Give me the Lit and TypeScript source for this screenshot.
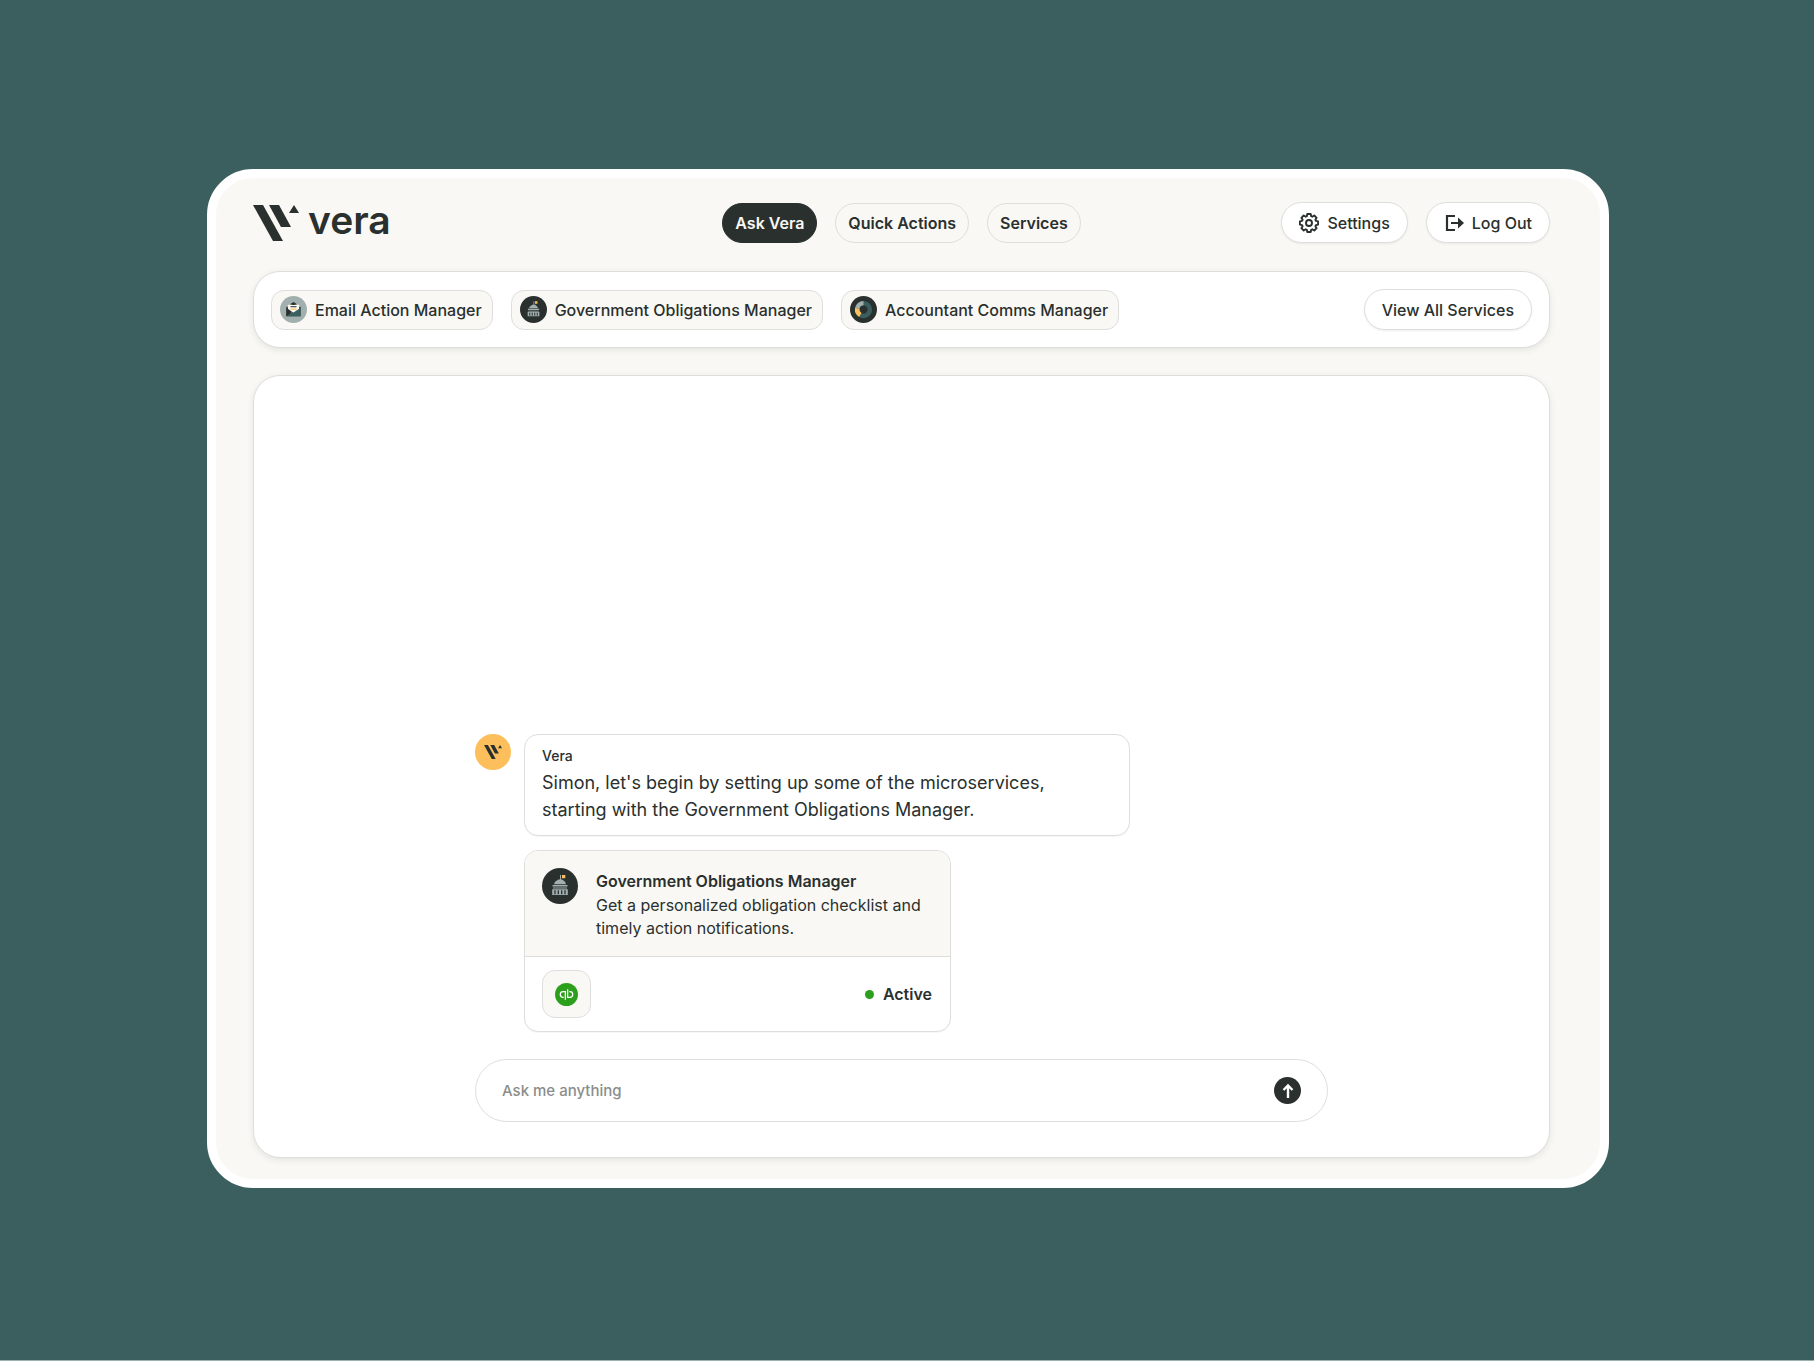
import { LitElement, html, css, svg } from "lit";
import { customElement, property, state } from "lit/decorators.js";

const markShapes = svg`
  <path d="M0 0h10l20 36H20z" />
  <path d="M16 0h10l12 22H28z" />
  <path d="M41 0l5 8H36z" />
`;

@customElement("vera-mark")
class VeraMark extends LitElement {
  static styles = css`
    :host { display: block; }
    .mark { display: block; width: 100%; fill: currentColor; }
  `;
  render() {
    return html`<svg class="mark" viewBox="0 0 46 36" aria-hidden="true">${markShapes}</svg>`;
  }
}

@customElement("service-icon")
class ServiceIcon extends LitElement {
  @property() name = "";

  static styles = css`
    :host { display: block; flex: none; width: 27px; height: 27px; }
    .icon { display: block; width: 100%; height: 100%; }
  `;

  private email() {
    return svg`
      <circle cx="18" cy="18" r="18" fill="#a1afae" />
      <path d="M8.500 14.500h19V27h-19z" fill="#2a302e" />
      <path d="M14 10.500l4-2.500 4 2.500v2h-8z" fill="#2a302e" />
      <path d="M10.500 11.500h15v9l-7.500 3.500-7.500-3.500z" fill="#fffdf8" />
      <path d="M15.500 9.500h5l-1.200 2.500h-2.600z" fill="#2a302e" />
      <path d="M14 14.300h8" stroke="#2a302e" stroke-width="1.400" />
      <path d="M14 17.500h8" stroke="#fdbf5b" stroke-width="1.600" />
      <path d="M27.500 15.500V27h-19l7.500-6 2 1z" fill="#3b5e5f" />
      <path d="M8.500 15.500l7.500 5.500-7.500 6z" fill="#2a302e" />
    `;
  }

  private government() {
    return svg`
      <circle cx="18" cy="18" r="18" fill="#2a302e" />
      <path d="M18.500 7v5" stroke="#a1afae" stroke-width="1" />
      <path d="M20 7h3.300v3.300H20z" fill="#fdbf5b" />
      <path d="M12 16.200c.5-2.500 2.600-3.500 4.300-4.700h3.900c1.700 1.200 3.300 2.200 3.800 4.700z" fill="#a1afae" />
      <path d="M10.500 17h15v1.500h-15zM11 19.500h14v1H11z" fill="#a1afae" />
      <path d="M10.200 21.200h15.600V27H10.200z" fill="#a1afae" />
      <path d="M13 22.200v4M16.300 22.200v4M19.700 22.200v4M23 22.200v4" stroke="#2a302e" stroke-width="1.300" />
    `;
  }

  private accountant() {
    return svg`
      <circle cx="18" cy="18" r="18" fill="#2a302e" />
      <circle cx="18" cy="18" r="8.500" fill="none" stroke="#3b5e5f" stroke-width="6" />
      <path d="M9.700 16.500A8.500 8.500 0 0 1 18 9.500" fill="none" stroke="#a1afae" stroke-width="6" />
      <path d="M9.700 16.500A8.500 8.500 0 0 0 13.700 25.300" fill="none" stroke="#fdbf5b" stroke-width="6" />
    `;
  }

  render() {
    const art =
      this.name === "email" ? this.email() : this.name === "government" ? this.government() : this.accountant();
    return html`<svg class="icon" viewBox="0 0 36 36" aria-hidden="true">${art}</svg>`;
  }
}

const tabs = ["Ask Vera", "Quick Actions", "Services"];
const services = [
  { icon: "email", label: "Email Action Manager" },
  { icon: "government", label: "Government Obligations Manager" },
  { icon: "accountant", label: "Accountant Comms Manager" },
];

@customElement("app-root")
class AppRoot extends LitElement {
  @state() private active = "Ask Vera";

  static styles = css`
    :host {
      --ink: #2a302e;
      --paper: #f9f8f4;
      --line: #dededc;
      --amber: #fdbf5b;
      --green: #2ca01c;
      display: flex;
      box-sizing: border-box;
      min-height: 100vh;
      padding: 169px 205px 172px 207px;
      border-bottom: 1px solid #9eafaf;
      background: #3b5e5f;
      color: var(--ink);
      font: 400 16px/24px Inter, "Liberation Sans", sans-serif;
    }
    * { box-sizing: border-box; }
    button, input { font: inherit; color: inherit; margin: 0; }
    button { cursor: pointer; }
    p, h1, h2 { margin: 0; font: inherit; }

    .window {
      flex: 1;
      min-width: 0;
      display: flex;
      flex-direction: column;
      border: 9px solid #fff;
      border-radius: 46px;
      background: var(--paper);
      padding: 24px 50px 21px 37px;
    }
    .header {
      display: grid;
      grid-template-columns: 1fr auto 1fr;
      align-items: center;
      margin-bottom: 28px;
    }
    .brand {
      display: flex;
      align-items: center;
      gap: 9px;
      color: inherit;
      text-decoration: none;
    }
    .brand-mark { width: 46px; }
    .brand-name { font-size: 39px; line-height: 36px; font-weight: 600; padding-bottom: 5px; }
    .tabs, .account, .chips { display: flex; gap: 18px; }
    .account { justify-content: flex-end; }

    .tab {
      height: 40px;
      padding: 0 12px;
      border: 1px solid var(--line);
      border-radius: 20px;
      background: transparent;
      font-weight: 600;
    }
    .tab.active { background: var(--ink); border-color: var(--ink); color: var(--paper); }
    .pill {
      display: flex;
      align-items: center;
      gap: 8px;
      height: 41px;
      padding: 0 17px;
      border: 1px solid var(--line);
      border-radius: 21px;
      background: #fff;
      font-weight: 500;
      box-shadow: 0 1px 2px rgba(42, 48, 46, 0.08);
    }
    .pill-icon { width: 20px; height: 20px; }

    .services, .chat {
      border: 1px solid var(--line);
      border-radius: 27px;
      background: #fff;
      box-shadow: 0 2px 6px rgba(42, 48, 46, 0.1);
    }
    .services {
      display: flex;
      align-items: center;
      justify-content: space-between;
      padding: 17px;
      margin-bottom: 27px;
    }
    .chip {
      display: flex;
      align-items: center;
      gap: 8px;
      height: 40px;
      padding: 0 10px 0 8px;
      border: 1px solid var(--line);
      border-radius: 13px;
      background: var(--paper);
      font-weight: 500;
    }

    .chat {
      flex: 1;
      display: flex;
      flex-direction: column;
      justify-content: flex-end;
      align-items: center;
      padding: 35px;
    }
    .thread { width: 100%; max-width: 853px; }
    .message { display: flex; gap: 13px; }
    .avatar {
      flex: none;
      display: grid;
      place-items: center;
      width: 36px;
      height: 36px;
      border-radius: 50%;
      background: var(--amber);
    }
    .avatar-mark { width: 18px; }
    .replies { display: flex; flex-direction: column; gap: 14px; width: 606px; }
    .bubble, .card {
      border: 1px solid var(--line);
      border-radius: 14px;
      background: #fff;
      box-shadow: 0 1px 1px rgba(42, 48, 46, 0.04);
    }
    .bubble { padding: 11px 17px 12px; }
    .author { font-size: 14px; line-height: 20px; font-weight: 500; margin-bottom: 3px; }
    .text { font-size: 18px; line-height: 27px; }
    .card { width: 427px; overflow: hidden; }
    .card-head {
      display: flex;
      gap: 18px;
      padding: 17px 17px 16px;
      background: var(--paper);
      border-bottom: 1px solid var(--line);
    }
    .card-icon { width: 36px; height: 36px; }
    .card-title { font-weight: 600; line-height: 26px; }
    .card-text { line-height: 23px; }
    .card-foot {
      display: flex;
      align-items: center;
      justify-content: space-between;
      padding: 13px 18px 13px 17px;
    }
    .app-tile {
      display: grid;
      place-items: center;
      width: 49px;
      height: 48px;
      border: 1px solid var(--line);
      border-radius: 13px;
      background: var(--paper);
    }
    .qb { width: 23px; height: 23px; }
    .status { display: flex; align-items: center; gap: 9px; font-weight: 600; }
    .dot { width: 9px; height: 9px; border-radius: 50%; background: var(--green); }

    .composer {
      display: flex;
      align-items: center;
      height: 63px;
      margin-top: 27px;
      padding: 0 26px;
      border: 1px solid var(--line);
      border-radius: 32px;
      background: #fff;
    }
    .prompt { flex: 1; min-width: 0; padding: 0; border: 0; outline: 0; background: none; font-weight: 500; font-size: 15px; }
    .prompt::placeholder { color: #8a8d8b; opacity: 1; }
    .send {
      display: grid;
      place-items: center;
      width: 27px;
      height: 27px;
      padding: 0;
      border: 0;
      border-radius: 50%;
      background: var(--ink);
    }
    .send-icon { width: 16px; height: 16px; }
  `;

  render() {
    return html`
      <div class="window">
        <header class="header">
          <a class="brand" href="#">
            <vera-mark class="brand-mark"></vera-mark>
            <span class="brand-name">vera</span>
          </a>
          <nav class="tabs">
            ${tabs.map(
              (tab) => html`<button
                type="button"
                class="tab ${tab === this.active ? "active" : ""}"
                @click=${() => (this.active = tab)}
              >${tab}</button>`
            )}
          </nav>
          <div class="account">
            <button type="button" class="pill">
              <svg class="pill-icon" viewBox="0 0 20 20" fill="none" stroke="currentColor" stroke-width="1.900" stroke-linejoin="round" aria-hidden="true">
                <path d="M8.300 1h3.400l.5 2.200 1.100.5 2-1.200 2.300 2.300-1.200 2 .5 1.100 2.200.5v3.200l-2.200.5-.5 1.100 1.200 2-2.300 2.300-2-1.200-1.100.5-.5 2.200H8.300l-.5-2.200-1.100-.5-2 1.200-2.300-2.300 1.200-2-.5-1.100L.9 11.600V8.400l2.200-.5.5-1.100-1.200-2 2.300-2.300 2 1.200 1.100-.5z" />
                <circle cx="10" cy="10" r="3" />
              </svg>
              Settings
            </button>
            <button type="button" class="pill">
              <svg class="pill-icon" viewBox="0 0 20 20" aria-hidden="true">
                <path d="M11 3H3v14h8M7 10h8" fill="none" stroke="currentColor" stroke-width="2.200" />
                <path d="M14 4.500l6 5.500-6 5.500z" fill="currentColor" />
              </svg>
              Log Out
            </button>
          </div>
        </header>

        <section class="services" aria-label="Services">
          <div class="chips">
            ${services.map(
              (s) => html`<button type="button" class="chip">
                <service-icon name=${s.icon}></service-icon>${s.label}
              </button>`
            )}
          </div>
          <button type="button" class="pill">View All Services</button>
        </section>

        <main class="chat">
          <div class="thread">
            <div class="message">
              <div class="avatar"><vera-mark class="avatar-mark"></vera-mark></div>
              <div class="replies">
                <div class="bubble">
                  <p class="author">Vera</p>
                  <p class="text">
                    Simon, let's begin by setting up some of the microservices,<br />starting with the Government
                    Obligations Manager.
                  </p>
                </div>
                <article class="card">
                  <div class="card-head">
                    <service-icon class="card-icon" name="government"></service-icon>
                    <div>
                      <h2 class="card-title">Government Obligations Manager</h2>
                      <p class="card-text">Get a personalized obligation checklist and timely action notifications.</p>
                    </div>
                  </div>
                  <div class="card-foot">
                    <div class="app-tile">
                      <svg class="qb" viewBox="0 0 24 24" role="img" aria-label="QuickBooks">
                        <circle cx="12" cy="12" r="12" fill="#2ca01c" />
                        <path d="M10.800 17.500V8.900H8.500a3 3 0 0 0 0 6h.6M13.200 6.500v8.400h2.300a3 3 0 0 0 0-6h-.6" fill="none" stroke="#fff" stroke-width="1.300" />
                      </svg>
                    </div>
                    <div class="status"><span class="dot"></span>Active</div>
                  </div>
                </article>
              </div>
            </div>
            <form class="composer" @submit=${(e: Event) => e.preventDefault()}>
              <input class="prompt" type="text" placeholder="Ask me anything" aria-label="Ask me anything" />
              <button class="send" type="submit" aria-label="Send">
                <svg class="send-icon" viewBox="0 0 16 16" fill="none" stroke="#fff" stroke-width="2.400" aria-hidden="true">
                  <path d="M8 15V2.500M3.500 7L8 2.500 12.500 7" />
                </svg>
              </button>
            </form>
          </div>
        </main>
      </div>
    `;
  }
}
